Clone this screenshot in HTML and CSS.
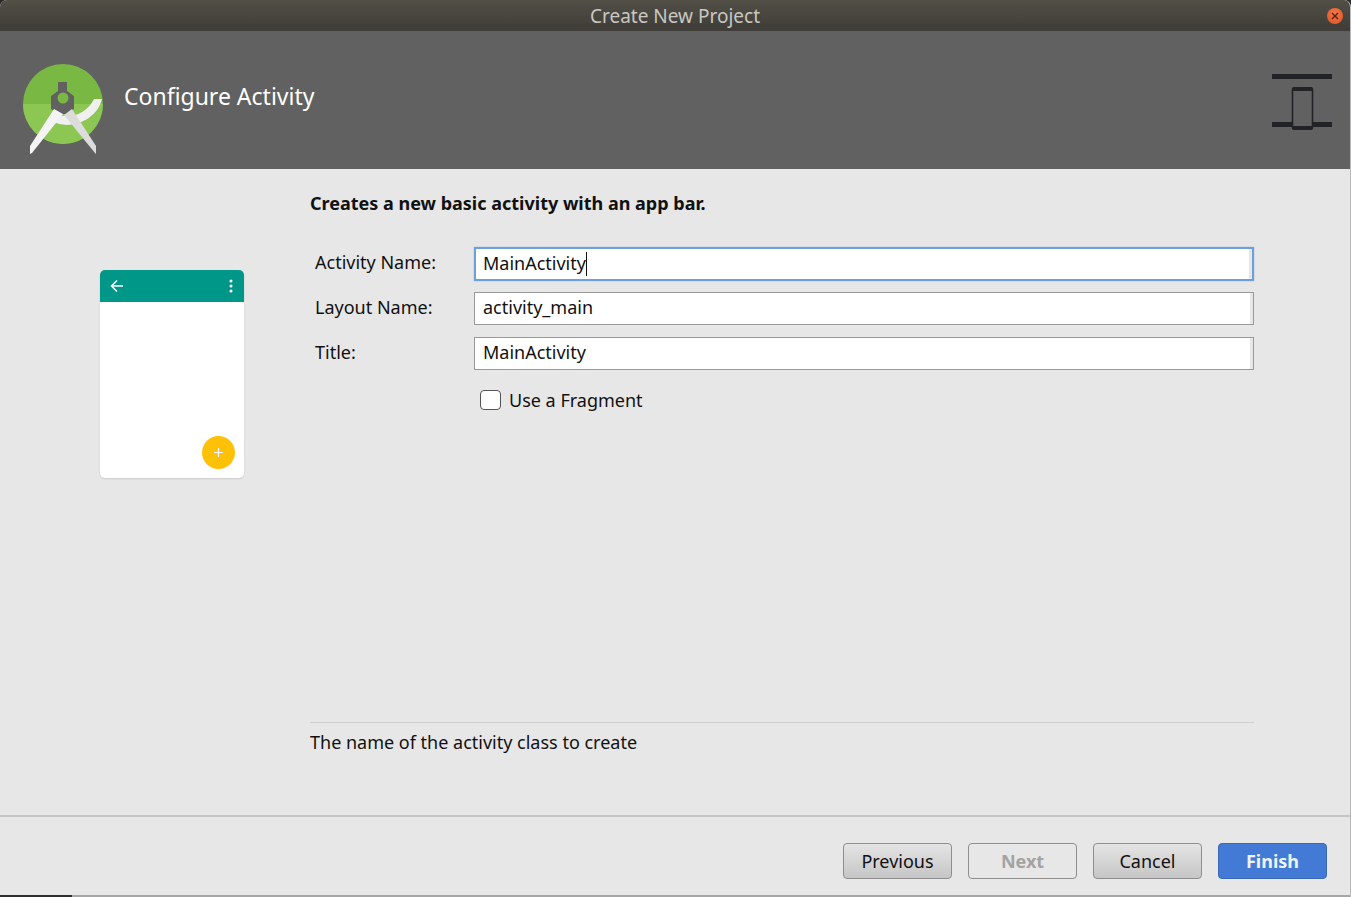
FILE: index.html
```html
<!DOCTYPE html>
<html lang="en">
    <head>
        <meta charset="utf-8" />
        <meta name="viewport" content="width=device-width, initial-scale=1" />
        <title>Create New Project</title>
        <link rel="stylesheet" href="styles.css">
    </head>
    <body>
        <div class="window">
            <div class="titlebar">
                <span>Create New Project</span>
                <button class="close" aria-label="Close">
                    <svg width="8" height="8" viewBox="0 0 8 8"><path d="M1 1l6 6M7 1l-6 6" stroke="#5a2010" stroke-width="1.4"/></svg>
                </button>
            </div>

            <header class="banner">
                <svg class="logo" width="84" height="96" viewBox="0 0 84 96">
                    <circle cx="41" cy="41" r="40" fill="#78b843"/>
                    <path d="M1 41h80a40 40 0 0 1-80 0z" fill="#8cc653"/>
                    <path d="M36 19h9v9l7 5v13l-7 5h-9l-7-5V33l7-5z" fill="#616161"/>
                    <circle cx="41" cy="35" r="5.5" fill="#78b843"/>
                    <path d="M80 36a44 44 0 0 1-3 8 38 38 0 0 1-32 18 38 38 0 0 1-14-3l3-8a30 30 0 0 0 11 2 30 30 0 0 0 27-17z" fill="#f0f0f0"/>
                    <path d="M32 46l9 5L10 90l-2 1v-8z" fill="#f4f4f4"/>
                    <path d="M50 46l-8 6 31 38 1 1v-8z" fill="#dcdcdc"/>
                </svg>
                <h1>Configure Activity</h1>
                <svg class="device" width="60" height="56" viewBox="0 0 60 56">
                    <path d="M0 0h60v5H0zM0 48h20v5H0zM40 48h20v5H40z" fill="#212326"/>
                    <rect x="20.5" y="14" width="20" height="41" rx="2" fill="none" stroke="#212326" stroke-width="1.6"/>
                    <path d="M20 15a2 2 0 0 1 2-2h17a2 2 0 0 1 2 2v2H20zM20 52h21v2a2 2 0 0 1-2 2H22a2 2 0 0 1-2-2z" fill="#212326"/>
                </svg>
            </header>

            <main class="content">
                <div class="preview">
                    <div class="phone">
                        <div class="appbar">
                            <svg width="14" height="14" viewBox="0 0 14 14"><path d="M13 7H2M7 1.500L1.500 7 7 12.500" fill="none" stroke="#fff" stroke-width="1.500"/></svg>
                            <svg width="4" height="14" viewBox="0 0 4 14"><circle cx="2" cy="2" r="1.500" fill="#fff"/><circle cx="2" cy="7" r="1.500" fill="#fff"/><circle cx="2" cy="12" r="1.500" fill="#fff"/></svg>
                        </div>
                        <div class="phone-body">
                            <div class="fab">
                                <svg width="9" height="9" viewBox="0 0 9 9"><path d="M4.500 0v9M0 4.500h9" stroke="#fff" stroke-width="1.200"/></svg>
                            </div>
                        </div>
                    </div>
                </div>

                <div class="options">
                    <p class="intro">Creates a new basic activity with an app bar.</p>
                    <div class="form">
                        <label>Activity Name:</label>
                        <div class="field focused"><span>MainActivity</span><i class="caret"></i></div>
                        <label>Layout Name:</label>
                        <div class="field"><span>activity_main</span></div>
                        <label>Title:</label>
                        <div class="field"><span>MainActivity</span></div>
                        <div class="check"><i class="box"></i><span>Use a Fragment</span></div>
                    </div>
                    <div class="hint">The name of the activity class to create</div>
                </div>
            </main>

            <footer class="actions">
                <button class="btn">Previous</button>
                <button class="btn off">Next</button>
                <button class="btn">Cancel</button>
                <button class="btn primary">Finish</button>
            </footer>

            <div class="edge"><i class="edge-dark"></i></div>
        </div>
    </body>
</html>
```

FILE: styles.css
```css
* { margin: 0; padding: 0; box-sizing: border-box; }
html, body { height: 100%; overflow: hidden; }
body { background: #2b2b2b; font-family: "Noto Sans", sans-serif; color: #111; }

.window {
    width: 1351px;
    height: 897px;
    display: flex;
    flex-direction: column;
    background: #e7e7e7;
    border-right: 1px solid #b9b9b9;
    border-radius: 7px 7px 0 0;
    overflow: hidden;
}

.titlebar {
    height: 31px;
    flex: none;
    position: relative;
    display: flex;
    align-items: center;
    justify-content: center;
    background: linear-gradient(#524f47, #3e3c37);
    color: #c9c7c1;
    font-size: 19px;
}
.close {
    position: absolute;
    right: 7px;
    top: 8px;
    width: 16px;
    height: 16px;
    border: 0;
    border-radius: 50%;
    background: radial-gradient(circle at 50% 35%, #f07a4c, #e2501f);
    display: flex;
    align-items: center;
    justify-content: center;
}

.banner {
    height: 138px;
    flex: none;
    display: flex;
    align-items: center;
    background: #616161;
    padding: 0 18px 0 22px;
}
.logo { flex: none; margin-top: 22px; }
.banner h1 {
    flex: 1;
    margin-left: 18px;
    font-size: 23px;
    font-weight: 400;
    color: #fff;
    margin-top: -9px;
}
.device { flex: none; margin-top: 3px; }

.content { flex: 1; display: flex; min-height: 0; }
.preview { width: 310px; flex: none; padding: 101px 0 0 100px; }
.phone {
    width: 144px;
    height: 208px;
    background: #fff;
    border-radius: 5px;
    box-shadow: 0 1px 2px rgba(0,0,0,.12);
    overflow: hidden;
    display: flex;
    flex-direction: column;
}
.appbar {
    height: 32px;
    flex: none;
    background: #009688;
    display: flex;
    align-items: center;
    justify-content: space-between;
    padding: 0 11px 0 10px;
}
.phone-body { flex: 1; display: flex; align-items: flex-end; justify-content: flex-end; padding: 0 9px 9px 0; }
.fab {
    width: 33px;
    height: 33px;
    border-radius: 50%;
    background: #ffc107;
    display: flex;
    align-items: center;
    justify-content: center;
}

.options { width: 944px; display: flex; flex-direction: column; padding-top: 22px; }
.intro { font-size: 18px; font-weight: 700; line-height: 24px; }

.form {
    display: grid;
    grid-template-columns: 164px 780px;
    row-gap: 12px;
    margin-top: 32px;
    font-size: 18px;
}
.form label { padding-left: 5px; line-height: 30px; }
.field {
    height: 33px;
    background: #fff;
    border: 1px solid #999;
    box-shadow: inset -3px 0 0 #e7e7e7;
    padding-left: 8px;
    line-height: 29px;
    display: flex;
    align-items: flex-start;
}
.field.focused {
    height: 34px;
    border: 2px solid #6ea1db;
    padding-left: 7px;
    margin-bottom: -1px;
    box-shadow: inset -3px 0 0 #e7e7e7, 0 0 1px #6ea1db;
}
.caret { width: 1px; height: 24px; margin-top: 3px; background: #111; }
.check {
    grid-column: 2;
    display: flex;
    align-items: center;
    gap: 8px;
    padding-left: 6px;
    margin-top: 6px;
    height: 24px;
}
.box {
    width: 21px;
    height: 20px;
    background: #fff;
    border: 1px solid #555;
    border-radius: 4px;
}

.hint {
    margin-top: auto;
    margin-bottom: 60px;
    border-top: 1px solid #cfcfcf;
    padding-top: 6px;
    font-size: 18px;
    line-height: 26px;
}

.actions {
    height: 80px;
    flex: none;
    display: flex;
    justify-content: flex-end;
    gap: 16px;
    padding: 26px 23px 0 0;
    border-top: 2px solid #c4c4c4;
}
.btn {
    width: 109px;
    height: 36px;
    border: 1px solid #8e8e8e;
    border-radius: 4px;
    background: linear-gradient(#e4e4e4, #c6c6c6);
    font-family: "Noto Sans", sans-serif;
    font-size: 18px;
    color: #111;
}
.btn.off { background: #e7e7e7; color: #a3a3a3; font-weight: 700; }
.btn.primary { background: #437ad6; border-color: #3a69b5; color: #eef4fc; font-weight: 700; }

.edge { height: 2px; flex: none; background: #a5a5a5; }
.edge-dark { display: block; width: 72px; height: 2px; background: #2e2e2e; }
```
